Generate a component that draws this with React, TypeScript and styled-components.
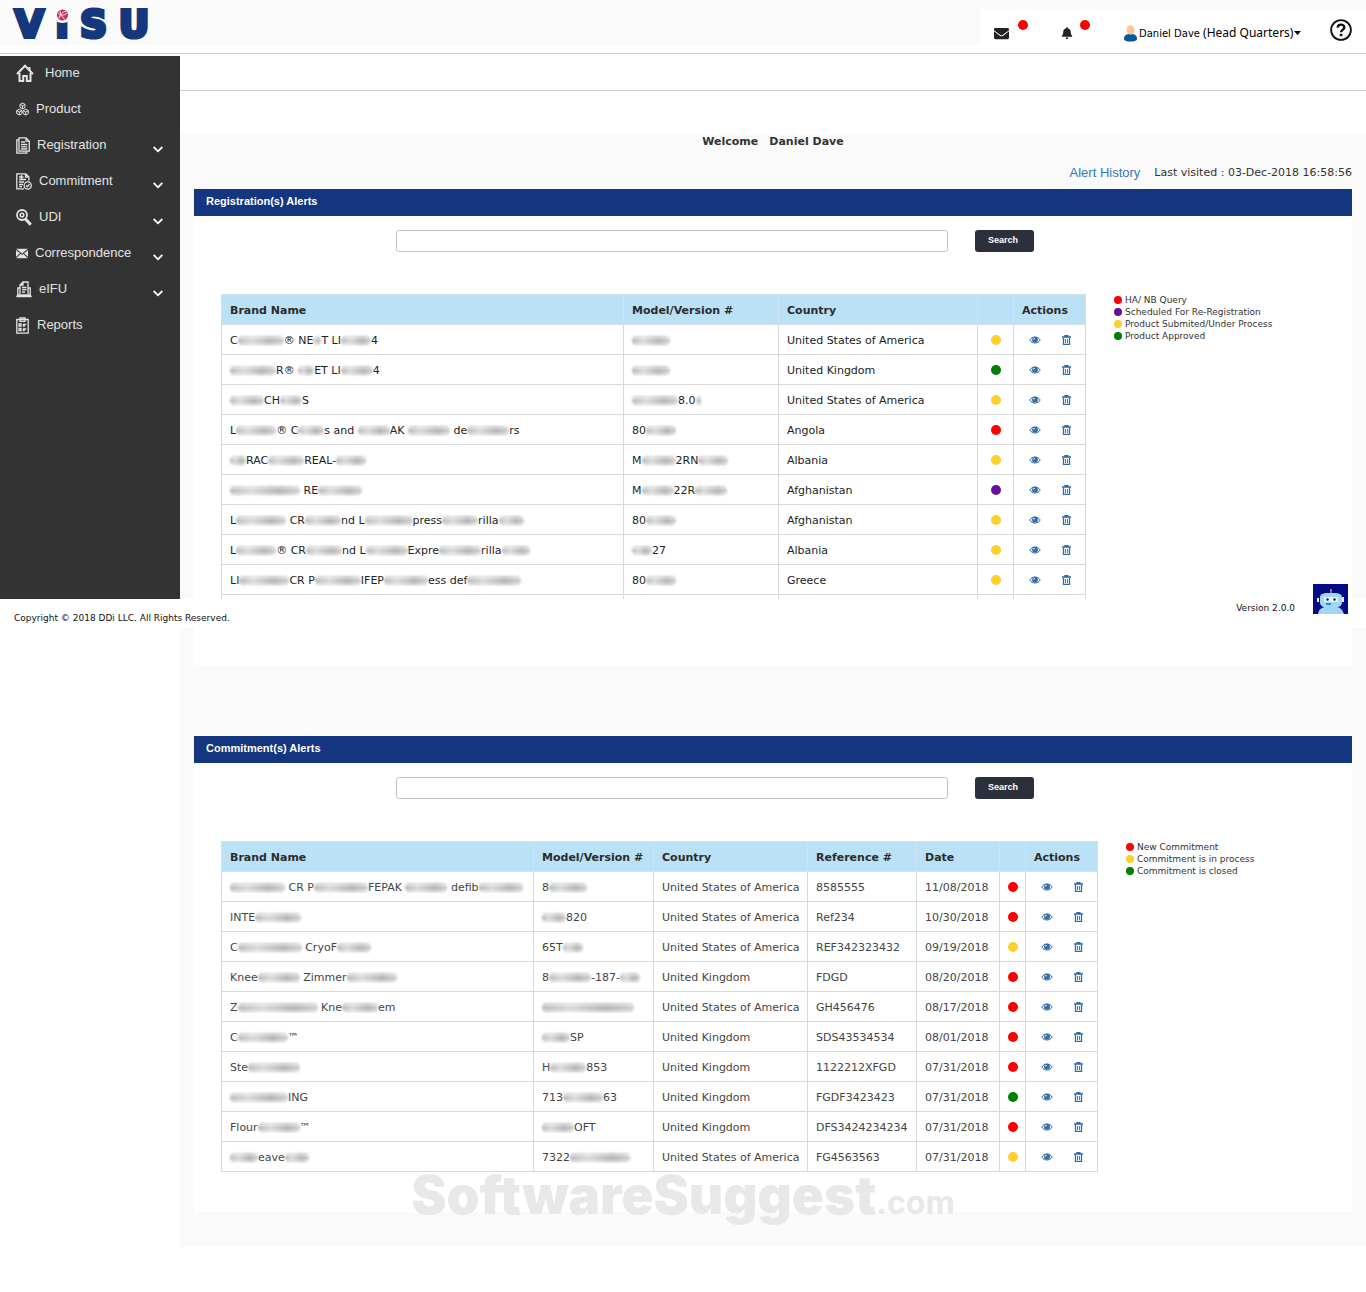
import React from "react";
import styled, { createGlobalStyle } from "styled-components";
import { FaEnvelope, FaBell } from "react-icons/fa";

const verdana = `"DejaVu Sans", Verdana, sans-serif`;
const arial = `"Liberation Sans", Arial, sans-serif`;

const GlobalStyle = createGlobalStyle`
  *, *::before, *::after { box-sizing: border-box; }
  body { margin: 0; background: #fff; color: #333; font: 11px/16px ${verdana}; }
  button, input { font: inherit; }
`;

const Page = styled.div`
  position: relative;
  min-height: 1292px;
`;

/* ---------- header ---------- */
const Header = styled.header`
  display: flex;
  height: 54px;
  border-bottom: 1px solid #ccc;
`;
const Brand = styled.div`
  flex: 1;
  height: 45px;
  padding-left: 15px;
  background: #fafafa;
`;
const LogoLink = styled.a`
  position: relative;
  display: inline-flex;
  gap: 12px;
  color: #14377d;
  font: bold 37px/50px ${verdana};
  text-decoration: none;
  -webkit-text-stroke: 4px #14377d;
`;
const LogoGlobe = styled.svg`
  position: absolute;
  left: 38px;
  top: 6px;
`;
const UserBar = styled.div`
  display: flex;
  align-items: center;
  width: 386px;
  height: 53px;
  padding: 4px 14px 0;
  border-top: 9px solid #fafafa;
`;
const IconButton = styled.button<{ $width: number }>`
  position: relative;
  display: flex;
  align-items: center;
  justify-content: flex-start;
  width: ${(p) => p.$width}px;
  height: 20px;
  padding: 0;
  border: 0;
  background: none;
  color: #222;
`;
const Badge = styled.i<{ $left: number }>`
  position: absolute;
  left: ${(p) => p.$left}px;
  top: -3px;
  width: 10px;
  height: 10px;
  border-radius: 50%;
  background: #f00;
`;
const UserButton = styled.button`
  display: flex;
  align-items: center;
  gap: 1px;
  margin-right: auto;
  padding: 0;
  border: 0;
  background: none;
  color: #000;
  white-space: nowrap;
  font: 12px/16px "Noto Sans", sans-serif;
`;
const UserName = styled.span`
  font: 10px/16px ${verdana};
`;
const HelpButton = styled.button`
  width: 22px;
  height: 22px;
  margin-top: -6px;
  padding: 0;
  border: 0;
  background: none;
`;

/* ---------- sidebar ---------- */
const Body = styled.div`
  display: flex;
  align-items: flex-start;
`;
const Sidebar = styled.nav`
  flex: 0 0 180px;
  height: 545px;
  margin-top: 2px;
  background: #333;
`;
const NavList = styled.ul`
  margin: 0;
  padding: 0;
  list-style: none;
`;
const NavLink = styled.a`
  display: flex;
  align-items: center;
  gap: 7px;
  height: 36px;
  padding: 0 17px 2px 16px;
  color: #e4e4e4;
  font: 13px/18px ${arial};
  text-decoration: none;
`;
const NavIcon = styled.span<{ $width: number }>`
  display: flex;
  width: ${(p) => p.$width}px;
`;
const Chevron = styled.svg`
  margin: 8px 0 0 auto;
`;

/* ---------- content ---------- */
const Content = styled.main`
  flex: 1;
  min-width: 0;
`;
const TopStrip = styled.div`
  height: 37px;
  margin-bottom: 43px;
  border-bottom: 1px solid #ccc;
`;
const Dashboard = styled.div`
  padding: 0 14px 35px;
  background: #fafafa;
`;
const Welcome = styled.h1`
  display: flex;
  justify-content: center;
  gap: 11px;
  margin: 0;
  font: bold 11px/15px ${verdana};
`;
const VisitRow = styled.div`
  display: flex;
  justify-content: flex-end;
  align-items: center;
  gap: 14px;
  height: 40px;
  padding-top: 8px;
`;
const HistoryLink = styled.a`
  color: #337ab7;
  font: 13px/18px ${arial};
  text-decoration: none;
`;
const Panel = styled.section`
  height: 476px;
  background: #fff;
  & + & { margin-top: 71px; }
`;
const PanelTitle = styled.h2`
  height: 27px;
  margin: 0;
  padding-left: 12px;
  background: #14357f;
  color: #fff;
  font: bold 11px/24px ${arial};
`;
const SearchForm = styled.form`
  display: flex;
  gap: 27px;
  padding: 14px 27px 42px 202px;
`;
const SearchInput = styled.input`
  flex: 0 1 552px;
  min-width: 0;
  height: 22px;
  padding: 0 6px;
  border: 1px solid #c4c4c4;
  border-radius: 3px;
  background: #fff;
`;
const SearchButton = styled.button`
  width: 59px;
  height: 22px;
  padding: 0 3px 2px 0;
  border: 0;
  border-radius: 3px;
  background: #2b303a;
  color: #fff;
  font: bold 9px/16px ${arial};
`;
const PanelBody = styled.div`
  display: flex;
  align-items: flex-start;
  gap: 28px;
  padding-left: 27px;
`;
const Table = styled.table<{ $width: number; $color: string }>`
  width: ${(p) => p.$width}px;
  table-layout: fixed;
  border-collapse: collapse;
  color: ${(p) => p.$color};
  td, th {
    height: 30px;
    padding: 2px 0 0 8px;
    border: 1px solid #d9d9d9;
    text-align: left;
    white-space: nowrap;
  }
  th { border-color: #d0e2ec; background: #bae1f6; color: #2b2b2b; }
`;
const DotCell = styled.td`
  && { padding: 0; }
`;
const ActionCell = styled.td`
  && { padding: 0 0 0 15px; }
`;
const Dot = styled.i<{ $color: string; $size: number }>`
  display: block;
  flex: none;
  width: ${(p) => p.$size}px;
  height: ${(p) => p.$size}px;
  margin: 0 ${(p) => (p.$size > 8 ? "auto" : "0")};
  border-radius: 50%;
  background: ${(p) => p.$color};
`;
const Actions = styled.div`
  display: flex;
  align-items: center;
  gap: 21px;
`;
const ActionButton = styled.button`
  display: flex;
  padding: 0;
  border: 0;
  background: none;
  color: #2f6ca8;
`;
const Smudge = styled.span<{ $width: number }>`
  display: inline-block;
  width: ${(p) => p.$width}px;
  height: 9px;
  border-radius: 4px;
  vertical-align: -1px;
  background:
    linear-gradient(90deg, rgba(255, 255, 255, 0.1), rgba(255, 255, 255, 0.5) 30%, rgba(255, 255, 255, 0) 70%, rgba(255, 255, 255, 0.4)),
    linear-gradient(#b4b4b4, #ddd 30%, #949494 55%, #ddd 75%, #acacac);
  filter: blur(1px);
`;
const Legend = styled.ul`
  margin: 0;
  padding: 0;
  list-style: none;
  font-size: 9px;
  line-height: 12px;
  color: #333;
`;
const LegendItem = styled.li`
  display: flex;
  align-items: center;
  gap: 3px;
  white-space: nowrap;
`;

/* ---------- overlays ---------- */
const Footer = styled.footer`
  position: absolute;
  top: 599px;
  left: 0;
  right: 0;
  z-index: 1;
  display: flex;
  justify-content: space-between;
  height: 29px;
  padding: 11px 18px 0 14px;
  background: #fff;
  color: #111;
  font-size: 9px;
`;
const FooterSide = styled.div`
  display: flex;
  gap: 18px;
  margin-top: -10px;
`;
const BotButton = styled.button`
  width: 35px;
  height: 30px;
  margin-top: -16px;
  padding: 0;
  border: 0;
  background: none;
`;
const Watermark = styled.div`
  position: absolute;
  top: 1160px;
  left: 0;
  right: 0;
  color: #e8e8e8;
  text-align: center;
  font: 900 53px/70px Inter, sans-serif;
  pointer-events: none;
`;
const WatermarkSuffix = styled.span`
  font-size: 32px;
  font-weight: 700;
`;

/* ---------- data ---------- */
const RED = "#f00";
const YELLOW = "#fdd02f";
const GREEN = "#008000";
const PURPLE = "#6a0f9c";
const US = "United States of America";
const UK = "United Kingdom";

/* "{n}" inside a text marks an obscured stretch n pixels wide. */
type Row = { cells: string[]; status: string };

const registrations: Row[] = [
  { cells: ["C{46}® NE{8}T LI{30}4", "{38}", US], status: YELLOW },
  { cells: ["{46}R® {16}ET LI{32}4", "{38}", UK], status: GREEN },
  { cells: ["{34}CH{22}S", "{46}8.0{5}", US], status: YELLOW },
  { cells: ["L{40}® C{26}s and {32}AK {42} de{42}rs", "80{30}", "Angola"], status: RED },
  { cells: ["{16}RAC{36}REAL-{30}", "M{34}2RN{30}", "Albania"], status: YELLOW },
  { cells: ["{70} RE{44}", "M{32}22R{32}", "Afghanistan"], status: PURPLE },
  { cells: ["L{50} CR{36}nd L{48}press{36}rilla{25}", "80{30}", "Afghanistan"], status: YELLOW },
  { cells: ["L{40}® CR{36}nd L{42}Expre{42}rilla{28}", "{20}27", "Albania"], status: YELLOW },
  { cells: ["LI{50}CR P{46}IFEP{44}ess def{54}", "80{30}", "Greece"], status: YELLOW },
];

const commitments: Row[] = [
  { cells: ["{55} CR P{54}FEPAK {42} defib{44}", "8{38}", US, "8585555", "11/08/2018"], status: RED },
  { cells: ["INTE{46}", "{24}820", US, "Ref234", "10/30/2018"], status: RED },
  { cells: ["C{64} CryoF{34}", "65T{20}", US, "REF342323432", "09/19/2018"], status: YELLOW },
  { cells: ["Knee{42} Zimmer{50}", "8{42}-187-{20}", UK, "FDGD", "08/20/2018"], status: RED },
  { cells: ["Z{80} Kne{36}em", "{92}", US, "GH456476", "08/17/2018"], status: RED },
  { cells: ["C{50}™", "{28}SP", UK, "SDS43534534", "08/01/2018"], status: RED },
  { cells: ["Ste{52}", "H{36}853", UK, "1122212XFGD", "07/31/2018"], status: RED },
  { cells: ["{58}ING", "713{40}63", UK, "FGDF3423423", "07/31/2018"], status: GREEN },
  { cells: ["Flour{42}™", "{32}OFT", UK, "DFS3424234234", "07/31/2018"], status: RED },
  { cells: ["{28}eave{24}", "7322{60}", US, "FG4563563", "07/31/2018"], status: YELLOW },
];

/* ---------- icons ---------- */
const line = { fill: "none", stroke: "#e4e4e4", strokeWidth: 1.3 };

const HomeIcon = () => (
  <svg width="18" height="18" viewBox="0 0 18 18" {...line} strokeWidth="2">
    <path d="M1 10 9 1.800l8 8.200M3.500 9v8h3.700v-5h3.600v5h3.700V9M13.500 6V3" />
  </svg>
);
const ProductIcon = () => (
  <svg width="13" height="14" viewBox="0 0 13 14" {...line} strokeWidth="1">
    <path d="M6.5 1 9 2.4v3L6.5 6.8 4 5.4v-3zM4 2.4l2.5 1.4L9 2.4M6.5 3.8v3M3.3 7.2l2.6 1.4v3L3.3 13 .7 11.6v-3zM.7 8.6 3.3 10l2.6-1.4M3.3 10v3M9.7 7.2l2.6 1.4v3L9.7 13l-2.6-1.4v-3zM7.1 8.6 9.7 10l2.6-1.4M9.7 10v3" />
  </svg>
);
const RegistrationIcon = () => (
  <svg width="14" height="17" viewBox="0 0 14 17" {...line}>
    <path d="M3 .8h7l3.3 3.4v10H3zM10 .8v3.4h3.3M3 2.8H.8v13.4h10v-2M5 5h4M5 7.5h6.300M5 9.800h6.300M5 12h6.300" />
  </svg>
);
const CommitmentIcon = () => (
  <svg width="16" height="17" viewBox="0 0 16 17" {...line}>
    <path d="M8 15.800H.8V.8h9l3 3v4M9.500.8v3.200h3.300M3 4h4.500M3 6.500h7M3 9h5M3 11.500h4M3 13.700h3M5.500 2v5" />
    <circle cx="11.700" cy="12.500" r="3.600" />
    <path d="m10 12.500 1.300 1.300 2.300-2.600" />
  </svg>
);
const UdiIcon = () => (
  <svg width="16" height="17" viewBox="0 0 16 17" {...line}>
    <circle cx="6" cy="6" r="5" strokeWidth="1.800" />
    <circle cx="6" cy="6" r="1.800" strokeWidth="1.500" />
    <path d="m9.500 10 5.300 5.700" strokeWidth="3" />
  </svg>
);
const MailIcon = () => (
  <svg width="14" height="11" viewBox="0 0 14 11">
    <path fill="#e4e4e4" d="M0 0h14v11H0z" />
    <path fill="none" stroke="#333" strokeWidth="1.200" d="m0 .5 7 6 7-6M0 10.500l5-5M14 10.500l-5-5" />
  </svg>
);
const EifuIcon = () => (
  <svg width="16" height="17" viewBox="0 0 16 17" {...line}>
    <path d="M4 13V4l3-3h5v12M7 1v3H4M6 6.500h4.500M6 8.700h4.500M6 11h3M4 7H1.800v7M12 7h2.200v7M.3 15.500h15.400M1 14h14" />
  </svg>
);
const ReportsIcon = () => (
  <svg width="13" height="17" viewBox="0 0 13 17" {...line}>
    <path d="M.8 2.500h11.400v13.700H.8zM4 .8h5v3.500H4zM3 7h2v2H3zM3 11.500h2v2H3zM6.800 7.500h3.400M6.800 9h2M6.800 12h3.400M6.800 13.500h2" />
  </svg>
);
const EyeIcon = () => (
  <svg width="12" height="8" viewBox="0 0 12 8">
    <path fill="none" stroke="currentColor" d="M.8 4C3.200 0 8.800 0 11.200 4 8.800 8 3.200 8 .8 4z" />
    <circle cx="6" cy="3.700" r="2.900" fill="currentColor" />
    <circle cx="5" cy="2.700" r=".8" fill="#fff" />
  </svg>
);
const TrashIcon = () => (
  <svg width="9" height="10" viewBox="0 0 9 10" fill="none" stroke="currentColor">
    <path d="M0 2h9M3 1.500v-1h3v1" strokeWidth="1.300" />
    <path d="M1.500 2.500v6.800h6V2.500" strokeWidth="1.300" />
    <path d="M3.500 4v4M5.500 4v4" strokeWidth=".9" />
  </svg>
);

const navItems = [
  { label: "Home", icon: <HomeIcon />, width: 22 },
  { label: "Product", icon: <ProductIcon />, width: 13 },
  { label: "Registration", icon: <RegistrationIcon />, width: 14, open: true },
  { label: "Commitment", icon: <CommitmentIcon />, width: 16, open: true },
  { label: "UDI", icon: <UdiIcon />, width: 16, open: true },
  { label: "Correspondence", icon: <MailIcon />, width: 12, open: true },
  { label: "eIFU", icon: <EifuIcon />, width: 16, open: true },
  { label: "Reports", icon: <ReportsIcon />, width: 14 },
];

const Masked = ({ text }: { text: string }) => (
  <>
    {text.split(/(\{\d+\})/).map((part, i) =>
      part.startsWith("{") ? <Smudge key={i} $width={parseInt(part.slice(1), 10)} /> : part
    )}
  </>
);

type AlertPanelProps = {
  id: string;
  title: string;
  headings: string[];
  widths: number[];
  rows: Row[];
  legend: [string, string][];
  color: string;
  trailingRow?: boolean;
};

const AlertPanel = ({ id, title, headings, widths, rows, legend, color, trailingRow }: AlertPanelProps) => (
  <Panel aria-labelledby={id}>
    <PanelTitle id={id}>{title}</PanelTitle>
    <SearchForm onSubmit={(e) => e.preventDefault()}>
      <SearchInput type="text" aria-label={`Search ${title}`} />
      <SearchButton type="submit">Search</SearchButton>
    </SearchForm>
    <PanelBody>
      <Table $width={widths.reduce((a, b) => a + b, 1)} $color={color}>
        <colgroup>
          {widths.map((w, i) => (
            <col key={i} style={{ width: w }} />
          ))}
        </colgroup>
        <thead>
          <tr>
            {headings.map((h, i) => (
              <th key={i} scope="col">{h}</th>
            ))}
          </tr>
        </thead>
        <tbody>
          {rows.map((row, r) => (
            <tr key={r}>
              {row.cells.map((c, i) => (
                <td key={i}><Masked text={c} /></td>
              ))}
              <DotCell><Dot $color={row.status} $size={10} /></DotCell>
              <ActionCell>
                <Actions>
                  <ActionButton type="button" aria-label="View"><EyeIcon /></ActionButton>
                  <ActionButton type="button" aria-label="Delete"><TrashIcon /></ActionButton>
                </Actions>
              </ActionCell>
            </tr>
          ))}
          {trailingRow && (
            <tr>{widths.map((_, i) => <td key={i} />)}</tr>
          )}
        </tbody>
      </Table>
      <Legend>
        {legend.map(([dot, label]) => (
          <LegendItem key={label}><Dot $color={dot} $size={8} />{label}</LegendItem>
        ))}
      </Legend>
    </PanelBody>
  </Panel>
);

export default function App() {
  return (
    <Page>
      <GlobalStyle />
      <Header>
        <Brand>
          <LogoLink href="#" aria-label="ViSU">
            <span>V</span><span>i</span><span>S</span><span>U</span>
            <LogoGlobe width="19" height="17" viewBox="0 0 19 17">
              <path d="M0 0h19v10a9.500 7 0 0 1-19 0z" fill="#fafafa" />
              <circle cx="9.500" cy="9" r="5.500" fill="#c2305c" />
              <path d="M5 7c3 3 6 3 9 0M6 12.500c1-4 4-7 7-7M7 4.500c0 3 2 7 5 9" fill="none" stroke="#fafafa" strokeWidth=".9" />
            </LogoGlobe>
          </LogoLink>
        </Brand>
        <UserBar>
          <IconButton type="button" aria-label="Messages" $width={67}>
            <FaEnvelope size={15} />
            <Badge $left={24} />
          </IconButton>
          <IconButton type="button" aria-label="Notifications" $width={62}>
            <FaBell size={12} />
            <Badge $left={19} />
          </IconButton>
          <UserButton type="button">
            <svg width="15" height="17" viewBox="0 0 15 17">
              <path fill="#0a5596" d="M1 14c0-4 2.500-5 6.500-5s6.500 1 6.500 5c0 3.500-13 3.500-13 0z" />
              <ellipse cx="7.500" cy="5" rx="4" ry="4.700" fill="#fbc795" />
            </svg>
            <span><UserName>Daniel Dave</UserName> (Head Quarters)</span>
            <svg width="7" height="4" viewBox="0 0 7 4"><path d="M0 0h7L3.500 4z" /></svg>
          </UserButton>
          <HelpButton type="button" aria-label="Help">
            <svg width="22" height="22" viewBox="0 0 22 22" fill="none" stroke="#111">
              <circle cx="11" cy="11" r="9.900" strokeWidth="1.800" />
              <path d="M7.700 8.600c.2-4 6.800-3.800 6.600-.1-.1 2.300-3.200 2.300-3.200 4.700" strokeWidth="2.400" />
              <path d="M9.800 14.800h2.600v2.400H9.800z" fill="#111" stroke="none" />
            </svg>
          </HelpButton>
        </UserBar>
      </Header>

      <Body>
        <Sidebar aria-label="Main">
          <NavList>
            {navItems.map((item) => (
              <li key={item.label}>
                <NavLink href="#">
                  <NavIcon $width={item.width}>{item.icon}</NavIcon>
                  {item.label}
                  {item.open && (
                    <Chevron width="10" height="7" viewBox="0 0 10 7" fill="none" stroke="#fff" strokeWidth="1.800">
                      <path d="m.7 1 4.300 4.300L9.300 1" />
                    </Chevron>
                  )}
                </NavLink>
              </li>
            ))}
          </NavList>
        </Sidebar>

        <Content>
          <TopStrip />
          <Dashboard>
            <Welcome><span>Welcome</span><span>Daniel Dave</span></Welcome>
            <VisitRow>
              <HistoryLink href="#">Alert History</HistoryLink>
              <span>Last visited : 03-Dec-2018 16:58:56</span>
            </VisitRow>
            <AlertPanel
              id="registrations"
              title="Registration(s) Alerts"
              headings={["Brand Name", "Model/Version #", "Country", "", "Actions"]}
              widths={[402, 155, 199, 36, 72]}
              rows={registrations}
              color="#222"
              trailingRow
              legend={[
                [RED, "HA/ NB Query"],
                [PURPLE, "Scheduled For Re-Registration"],
                [YELLOW, "Product Submited/Under Process"],
                [GREEN, "Product Approved"],
              ]}
            />
            <AlertPanel
              id="commitments"
              title="Commitment(s) Alerts"
              headings={["Brand Name", "Model/Version #", "Country", "Reference #", "Date", "", "Actions"]}
              widths={[312, 120, 154, 109, 83, 26, 72]}
              rows={commitments}
              color="#444"
              legend={[
                [RED, "New Commitment"],
                [YELLOW, "Commitment is in process"],
                [GREEN, "Commitment is closed"],
              ]}
            />
          </Dashboard>
        </Content>
      </Body>

      <Footer>
        <span>Copyright © 2018 DDi LLC. All Rights Reserved.</span>
        <FooterSide>
          <span>Version 2.0.0</span>
          <BotButton type="button" aria-label="Chat assistant">
            <svg width="35" height="30" viewBox="0 0 35 30">
              <path fill="#060a86" d="M0 0h35v30H0z" />
              <path fill="#9fd8f5" d="M5 30c1-5 4-7 8-7h10c4 0 6 2 8 7zM7 14c0-5 4-5 11-5s11 0 11 5v4c0 3-2 5-5 5H12c-3 0-5-2-5-5z" />
              <path fill="#dff3fd" d="M11 13h14v5H11zM4 14h2v4H4zM29 13h2v5h-2z" />
              <path stroke="#9fd8f5" d="M18 9V6" />
              <circle cx="18" cy="6" r="1" fill="#e77" />
              <circle cx="14.500" cy="15.500" r="1.200" fill="#222" />
              <circle cx="21.500" cy="15.500" r="1.200" fill="#222" />
              <path stroke="#1a6ea8" strokeWidth="1.500" d="M13 20h5" />
            </svg>
          </BotButton>
        </FooterSide>
      </Footer>
      <Watermark aria-hidden="true">SoftwareSuggest<WatermarkSuffix>.com</WatermarkSuffix></Watermark>
    </Page>
  );
}
